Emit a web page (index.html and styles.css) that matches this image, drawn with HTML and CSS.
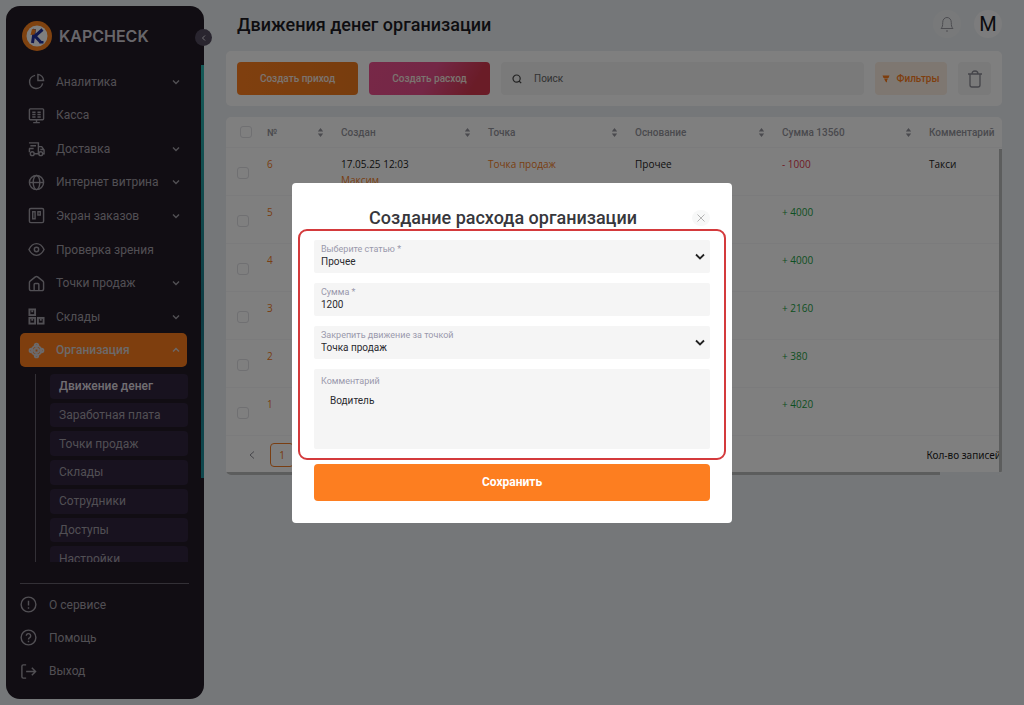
FILE: index.html
```html
<!DOCTYPE html>
<html lang="ru">
<head>
<meta charset="utf-8">
<title>Движения денег организации</title>
<link rel="stylesheet" href="styles.css">
</head>
<body>
<div class="app">
  <aside class="sidebar">
    <div class="brand">
      <svg class="brand-logo" viewBox="0 0 30 30" aria-hidden="true">
        <circle cx="15" cy="15" r="15" fill="#ff8420"/>
        <circle cx="15" cy="15" r="10.500" fill="#fff"/>
        <path d="M12.500 8l-2 14M20.500 8.500L13 15l6 6.500" fill="none" stroke="#23309c" stroke-width="3"/>
        <path d="M17.500 20h4v2.500h-4z" fill="#23309c"/>
        <path d="M8.500 14l1.500-6 4 .5-1.500 5z" fill="#ff8420"/>
      </svg>
      <span class="brand-name">KAPCHECK</span>
    </div>
    <button class="collapse" aria-label="Свернуть меню"><svg viewBox="0 0 8 8"><path d="M5 1.500L2.500 4 5 6.500"/></svg></button>
    <span class="side-scroll"></span>
    <nav class="menu">
      <a class="menu-item" href="#"><svg class="icon" viewBox="0 0 18 18"><path d="M7.500 2.500A7 7 0 1 0 15.500 11M10.500 1.500v6.500h6a6.500 6.500 0 0 0-6-6.500z"/></svg><span>Аналитика</span><svg class="chev" viewBox="0 0 8 8"><path d="M1 2.500l3 3 3-3"/></svg></a>
      <a class="menu-item" href="#"><svg class="icon" viewBox="0 0 18 18"><rect x="1.500" y="2" width="15" height="11.500" rx="1"/><path d="M9 13.500v3M5.500 16.500h7M4.500 5.500h3.500M4.500 8h3.500M4.500 10.500h3.500M10 5.500h3.500M10 8h3.500M10 10.500h3.500"/></svg><span>Касса</span></a>
      <a class="menu-item" href="#"><svg class="icon" viewBox="0 0 18 18"><path d="M1 3h10v11.500H6.500M2.500 6h6M1 9h5M1.500 9v4M11 7h3.500l2.500 3.500v4h-1.500M13 10h4"/><circle cx="4.500" cy="14.500" r="2"/><circle cx="13.500" cy="14.500" r="2"/></svg><span>Доставка</span><svg class="chev" viewBox="0 0 8 8"><path d="M1 2.500l3 3 3-3"/></svg></a>
      <a class="menu-item" href="#"><svg class="icon" viewBox="0 0 18 18"><circle cx="9" cy="9" r="7.500"/><ellipse cx="9" cy="9" rx="3.500" ry="7.500"/><path d="M1.500 9h15"/></svg><span>Интернет витрина</span><svg class="chev" viewBox="0 0 8 8"><path d="M1 2.500l3 3 3-3"/></svg></a>
      <a class="menu-item" href="#"><svg class="icon" viewBox="0 0 18 18"><rect x="1.500" y="1.500" width="15" height="15" rx="1.500"/><rect x="5" y="5" width="2.500" height="7.500"/><rect x="10.500" y="5" width="2.500" height="3.500"/></svg><span>Экран заказов</span><svg class="chev" viewBox="0 0 8 8"><path d="M1 2.500l3 3 3-3"/></svg></a>
      <a class="menu-item" href="#"><svg class="icon" viewBox="0 0 18 18"><path d="M1 9c2-4 4.700-6.200 8-6.200S15 5 17 9c-2 4-4.700 6.200-8 6.200S3 13 1 9z"/><circle cx="9" cy="9" r="2.300"/></svg><span>Проверка зрения</span></a>
      <a class="menu-item" href="#"><svg class="icon" viewBox="0 0 18 18"><path d="M3.500 16.500q-2 0-2-2V8q0-1 1-1.800L7.800 2q1.200-.9 2.400 0l5.300 4.200q1 .8 1 1.800v6.500q0 2-2 2zM6.500 16.500V10q0-1 1-1h3q1 0 1 1v6.500"/></svg><span>Точки продаж</span><svg class="chev" viewBox="0 0 8 8"><path d="M1 2.500l3 3 3-3"/></svg></a>
      <a class="menu-item" href="#"><svg class="icon bold" viewBox="0 0 18 18"><rect x="1.500" y="1.500" width="6" height="6"/><rect x="1.500" y="10.500" width="6" height="6"/><rect x="10.500" y="10.500" width="6" height="6"/><path d="M3.500 3.500h2M3.500 12.500h2M12.500 12.500h2"/></svg><span>Склады</span><svg class="chev" viewBox="0 0 8 8"><path d="M1 2.500l3 3 3-3"/></svg></a>
      <a class="menu-item active" href="#"><svg class="icon bold" viewBox="0 0 18 18"><circle cx="9" cy="9" r="5"/><rect x="7" y="7" width="4" height="4" rx="1"/><circle cx="9" cy="3.500" r="1.800"/><circle cx="9" cy="14.500" r="1.800"/><circle cx="3.500" cy="9" r="1.800"/><circle cx="14.500" cy="9" r="1.800"/></svg><span>Организация</span><svg class="chev" viewBox="0 0 8 8"><path d="M1 5.500l3-3 3 3"/></svg></a>
    </nav>
    <div class="submenu">
      <nav class="submenu-list">
        <a class="sub-item current" href="#">Движение денег</a>
        <a class="sub-item" href="#">Заработная плата</a>
        <a class="sub-item" href="#">Точки продаж</a>
        <a class="sub-item" href="#">Склады</a>
        <a class="sub-item" href="#">Сотрудники</a>
        <a class="sub-item" href="#">Доступы</a>
        <a class="sub-item" href="#">Настройки</a>
      </nav>
    </div>
    <nav class="service">
      <a class="service-item" href="#"><svg class="icon" viewBox="0 0 18 18"><circle cx="9" cy="9" r="7.800"/><path d="M9 5v5M9 12v1.500"/></svg><span>О сервисе</span></a>
      <a class="service-item" href="#"><svg class="icon" viewBox="0 0 18 18"><circle cx="9" cy="9" r="7.800"/><path d="M6.700 7.200a2.300 2.300 0 1 1 3.600 1.900Q9 9.800 9 11M9 12.500V14"/></svg><span>Помощь</span></a>
      <a class="service-item" href="#"><svg class="icon" viewBox="0 0 18 18"><path d="M6.500 2h-3Q2 2 2 3.500v11Q2 16 3.500 16h3M6.500 9h10M12.500 5l4 4-4 4"/></svg><span>Выход</span></a>
    </nav>
  </aside>

  <main class="main">
    <header class="topbar">
      <h1>Движения денег организации</h1>
      <button class="round" aria-label="Уведомления"><svg class="bell" viewBox="0 0 14 16"><path d="M1 12.500h12c-1.500-1.500-1.700-3-1.700-6C11.300 3.500 9.500 1.500 7 1.500S2.700 3.500 2.700 6.500c0 3-.2 4.500-1.700 6zM6 15h2"/></svg></button>
      <button class="round avatar">M</button>
    </header>

    <section class="card toolbar">
      <button class="btn income">Создать приход</button>
      <button class="btn expense">Создать расход</button>
      <label class="search"><svg viewBox="0 0 10 10"><circle cx="4.600" cy="4.600" r="3.600"/><path d="M7 7l2.200 2.200"/></svg><input type="search" placeholder="Поиск" aria-label="Поиск"></label>
      <button class="filters"><svg viewBox="0 0 8 8"><path d="M.5.500h7L6.500 3h-5zM2 3.500h4L5 5.500v2L3.500 6.500z"/></svg>Фильтры</button>
      <button class="trash" aria-label="Удалить"><svg viewBox="0 0 16 18"><path d="M1 4h14M3 4v11q0 2 2 2h6q2 0 2-2V4M5 4q0-3 3-3t3 3"/></svg></button>
    </section>

    <section class="card table-card">
      <div class="table-view">
        <table>
          <colgroup><col class="c-check"><col class="c-num"><col class="c-std"><col class="c-std"><col class="c-std"><col class="c-std"><col></colgroup>
          <thead>
            <tr>
              <th><input type="checkbox" aria-label="Выбрать все"></th>
              <th><div class="head">№<svg viewBox="0 0 6 10"><path d="M0 4l3-4 3 4zM0 6l3 4 3-4z"/></svg></div></th>
              <th><div class="head">Создан<svg viewBox="0 0 6 10"><path d="M0 4l3-4 3 4zM0 6l3 4 3-4z"/></svg></div></th>
              <th><div class="head">Точка<svg viewBox="0 0 6 10"><path d="M0 4l3-4 3 4zM0 6l3 4 3-4z"/></svg></div></th>
              <th><div class="head">Основание<svg viewBox="0 0 6 10"><path d="M0 4l3-4 3 4zM0 6l3 4 3-4z"/></svg></div></th>
              <th><div class="head">Сумма 13560<svg viewBox="0 0 6 10"><path d="M0 4l3-4 3 4zM0 6l3 4 3-4z"/></svg></div></th>
              <th><div class="head">Комментарий</div></th>
            </tr>
          </thead>
          <tbody>
            <tr><td><input type="checkbox" aria-label="Запись 6"></td><td class="accent">6</td><td>17.05.25 12:03<br><a class="accent" href="#">Максим</a></td><td><a class="accent" href="#">Точка продаж</a></td><td>Прочее</td><td class="minus">- 1000</td><td>Такси</td></tr>
            <tr><td><input type="checkbox" aria-label="Запись 5"></td><td class="accent">5</td><td></td><td></td><td></td><td class="plus">+ 4000</td><td></td></tr>
            <tr><td><input type="checkbox" aria-label="Запись 4"></td><td class="accent">4</td><td></td><td></td><td></td><td class="plus">+ 4000</td><td></td></tr>
            <tr><td><input type="checkbox" aria-label="Запись 3"></td><td class="accent">3</td><td></td><td></td><td></td><td class="plus">+ 2160</td><td></td></tr>
            <tr><td><input type="checkbox" aria-label="Запись 2"></td><td class="accent">2</td><td></td><td></td><td></td><td class="plus">+ 380</td><td></td></tr>
            <tr><td><input type="checkbox" aria-label="Запись 1"></td><td class="accent">1</td><td></td><td></td><td></td><td class="plus">+ 4020</td><td></td></tr>
          </tbody>
        </table>
        <div class="pager">
          <button class="prev" aria-label="Назад"><svg viewBox="0 0 8 8"><path d="M6 .5L2 4l4 3.500"/></svg></button>
          <button class="page">1</button>
          <span class="count">Кол-во записей</span>
        </div>
        <span class="v-scroll"></span>
      </div>
      <div class="h-scroll"><span></span></div>
    </section>
  </main>
</div>

<div class="overlay">
  <form class="modal" role="dialog" aria-labelledby="modal-title">
    <div class="modal-head">
      <h2 id="modal-title">Создание расхода организации</h2>
      <button type="button" class="close" aria-label="Закрыть"><svg viewBox="0 0 8 8"><path d="M.5.500l7 7M7.500.500l-7 7"/></svg></button>
    </div>
    <div class="frame">
      <div class="field">
        <label for="article">Выберите статью *</label>
        <select id="article"><option>Прочее</option></select>
        <svg class="arrow" viewBox="0 0 10 6"><path d="M1 1l4 4 4-4"/></svg>
      </div>
      <div class="field">
        <label for="sum">Сумма *</label>
        <input id="sum" type="text" value="1200">
      </div>
      <div class="field">
        <label for="point">Закрепить движение за точкой</label>
        <select id="point"><option>Точка продаж</option></select>
        <svg class="arrow" viewBox="0 0 10 6"><path d="M1 1l4 4 4-4"/></svg>
      </div>
      <div class="field area">
        <label for="comment">Комментарий</label>
        <textarea id="comment">Водитель</textarea>
      </div>
    </div>
    <button type="submit" class="save">Сохранить</button>
  </form>
</div>
</body>
</html>
```
FILE: styles.css
```css
* { box-sizing: border-box; }

body {
  margin: 0;
  background: #ebeff2;
  color: #1c1b22;
  font-family: Roboto, "Liberation Sans", sans-serif;
  font-size: 10px;
}

button, input, select, textarea { font: inherit; color: inherit; border: 0; padding: 0; margin: 0; }
button { cursor: pointer; }
a { text-decoration: none; color: inherit; }
svg { fill: none; stroke: currentColor; flex: none; }

.app { display: flex; min-height: 100vh; }

/* Sidebar */
.sidebar {
  position: relative;
  flex: none;
  width: 198px;
  margin: 6px;
  padding: 0 15px 10px 14px;
  background: #221a26;
  border-radius: 14px;
  color: #a39fa8;
  font-size: 12px;
}
.brand { display: flex; align-items: center; gap: 7px; height: 59px; padding-left: 2px; }
.brand-logo { width: 30px; height: 30px; stroke: none; }
.brand-name { color: #d0cdd4; font: 600 16px Inter, sans-serif; }
.collapse {
  position: absolute;
  top: 23px;
  right: -8px;
  display: grid;
  place-items: center;
  width: 17px;
  height: 17px;
  border-radius: 50%;
  background: #524a5e;
  color: #e4e0e8;
}
.collapse svg { width: 8px; height: 8px; }
.side-scroll {
  position: absolute;
  top: 59px;
  right: 0;
  width: 3px;
  height: 413px;
  background: linear-gradient(#2ab5b0, #1c7888 60%, #1c8f9c);
}
.menu { display: grid; grid-template-rows: repeat(9, 1fr); height: 302px; }
.menu-item {
  display: flex;
  align-items: center;
  gap: 11px;
  width: 167px;
  padding: 0 7px 0 8px;
  border-radius: 5px;
}
.menu-item span { flex: 1; white-space: nowrap; }
.icon { width: 17px; height: 17px; stroke-width: 1.5; }
.icon.bold { stroke-width: 2; }
.chev { width: 8px; height: 8px; stroke-width: 1.4; }
.menu-item.active { background: #fd7d1c; color: #d8d2d4; font-weight: 500; }

.submenu { margin: 7px 0 0 15px; height: 188px; overflow: hidden; border-left: 1px solid #66616c; padding-left: 14px; }
.submenu-list { display: grid; grid-template-rows: repeat(7, 1fr); gap: 4px; height: 197px; width: 138px; }
.sub-item { display: flex; align-items: center; padding-left: 9px; border-radius: 4px; background: #30243e; }
.sub-item.current { color: #e0dde4; font-weight: 500; }

.service {
  display: grid;
  grid-template-rows: repeat(3, 1fr);
  height: 105px;
  margin-top: 21px;
  padding-top: 4px;
  border-top: 1px solid #66616c;
}
.service-item { display: flex; align-items: center; gap: 12px; }

/* Main */
.main { flex: 1; min-width: 0; padding: 0 22px 22px 16px; }
.topbar { display: flex; align-items: center; gap: 13px; height: 48px; margin-bottom: 3px; padding-left: 11px; }
h1 { flex: 1; margin: 0; font-size: 18px; font-weight: 500; }
.round {
  display: grid;
  place-items: center;
  width: 28px;
  height: 28px;
  border-radius: 50%;
  background: #f1f3f5;
  color: #9b9ba2;
}
.bell { width: 14px; height: 16px; }
.avatar { background: #f8f9fa; color: #17171c; font-size: 20px; }

.card { background: #fff; border-radius: 5px; }
.toolbar { display: flex; gap: 11px; padding: 11px; margin-bottom: 11px; }
.toolbar > * { height: 33px; border-radius: 4px; }
.btn { width: 121px; font-weight: 500; color: #f6e8e0; }
.income { background: linear-gradient(90deg, #ff7f1e, #f07a1c); }
.expense { background: linear-gradient(120deg, #f05090, #e84f8c 50%, #d4384f 85%); }
.search { display: flex; flex: 1; align-items: center; gap: 12px; padding: 0 11px; background: #f4f4f4; color: #444; }
.search svg { width: 10px; height: 10px; stroke-width: 1.2; }
.search input { flex: 1; min-width: 0; background: none; outline: 0; }
.search input::placeholder { color: #666; }
.filters {
  display: flex;
  align-items: center;
  justify-content: center;
  gap: 6px;
  width: 72px;
  background: #fceee2;
  color: #fd7d1c;
  font-weight: 500;
}
.filters svg { width: 8px; height: 8px; fill: currentColor; stroke: none; }
.trash { display: grid; place-items: center; width: 33px; background: #f4f4f4; color: #8b8b94; }
.trash svg { width: 16px; height: 18px; stroke-width: 1.3; }

.table-card { overflow: hidden; }
.table-view { position: relative; overflow: hidden; }
table { width: 100%; min-width: 841px; table-layout: fixed; border-collapse: separate; border-spacing: 0; font-family: "Open Sans", "Noto Sans", sans-serif; }
.c-check { width: 32px; }
.c-num { width: 74px; }
.c-std { width: 147px; }
th { height: 31px; padding: 0 8px 0 9px; border-bottom: 1px solid #f6f6f8; color: #94949c; font: 500 10px Roboto, sans-serif; }
th:first-child { padding: 0 0 0 14px; text-align: left; }
.head { display: flex; align-items: center; justify-content: space-between; }
.head svg { width: 7px; height: 9px; fill: #94949c; stroke: none; }
td { height: 48px; padding: 8px 8px 0 9px; border-bottom: 1px solid #f6f6f8; line-height: 16px; vertical-align: top; }
td:first-child { padding: 2px 0 0 11px; vertical-align: middle; }
input[type="checkbox"] {
  display: block;
  appearance: none;
  width: 12px;
  height: 12px;
  border: 1px solid #e0e0e4;
  border-radius: 3px;
}
.accent { color: #f27c24; }
.minus { color: #e0344c; }
.plus { color: #1ba044; }
.pager { display: flex; align-items: center; height: 36px; padding-left: 22px; padding-top: 2px; font-family: "Noto Sans", sans-serif; }
.pager button { background: none; }
.prev { display: grid; place-items: center; width: 8px; color: #8d8d96; }
.prev svg { width: 8px; height: 8px; }
.pager .page { width: 24px; height: 24px; margin-left: 14px; border: 1px solid #f27c24; border-radius: 4px; color: #f27c24; }
.count { margin-left: auto; padding-right: 1px; white-space: nowrap; }
.v-scroll { position: absolute; top: 32px; right: 0; bottom: 0; width: 3px; background: #b8babb; }
.h-scroll { height: 3px; background: #ebeff2; }
.h-scroll span { display: block; width: 92%; height: 3px; background: #b8babb; }

/* Modal */
.overlay { position: fixed; inset: 0; display: flex; align-items: center; justify-content: center; background: rgba(0, 0, 0, 0.5); }
.modal { width: 440px; padding: 24px 22px 22px; background: #fff; border-radius: 4px; color: #2b2b30; }
.modal-head { display: flex; align-items: center; height: 22px; }
h2 { flex: 1; margin: 0; text-align: center; font-size: 18px; font-weight: 500; line-height: 22px; color: #37373c; }
.close { display: grid; place-items: center; width: 18px; height: 16px; border-radius: 50%; background: #f7f8f8; color: #b5b5b5; }
.close svg { width: 8px; height: 8px; }
.frame { display: grid; gap: 10px; margin: 0 -16px; padding: 9px 14px; border: 2px solid #d43a3c; border-radius: 9px; }
.field { position: relative; height: 33px; padding: 4px 7px 0; background: #f5f5f5; border-radius: 2px; }
.field label { display: block; font-size: 9px; line-height: 11px; color: #9a99ac; }
.field input, .field select { display: block; width: 100%; height: 14px; line-height: 14px; background: none; appearance: none; outline: 0; }
.arrow { position: absolute; right: 5px; top: 13px; width: 10px; height: 7px; stroke-width: 1.8; color: #222; pointer-events: none; }
.area { height: 80px; padding-top: 7px; }
.area textarea { display: block; width: 100%; height: 60px; padding: 7px 9px; line-height: 14px; background: none; resize: none; outline: 0; }
.save { display: block; width: 100%; height: 37px; margin-top: 4px; border-radius: 4px; background: #fd7e20; color: #fff; font-size: 12px; font-weight: 700; }
```
